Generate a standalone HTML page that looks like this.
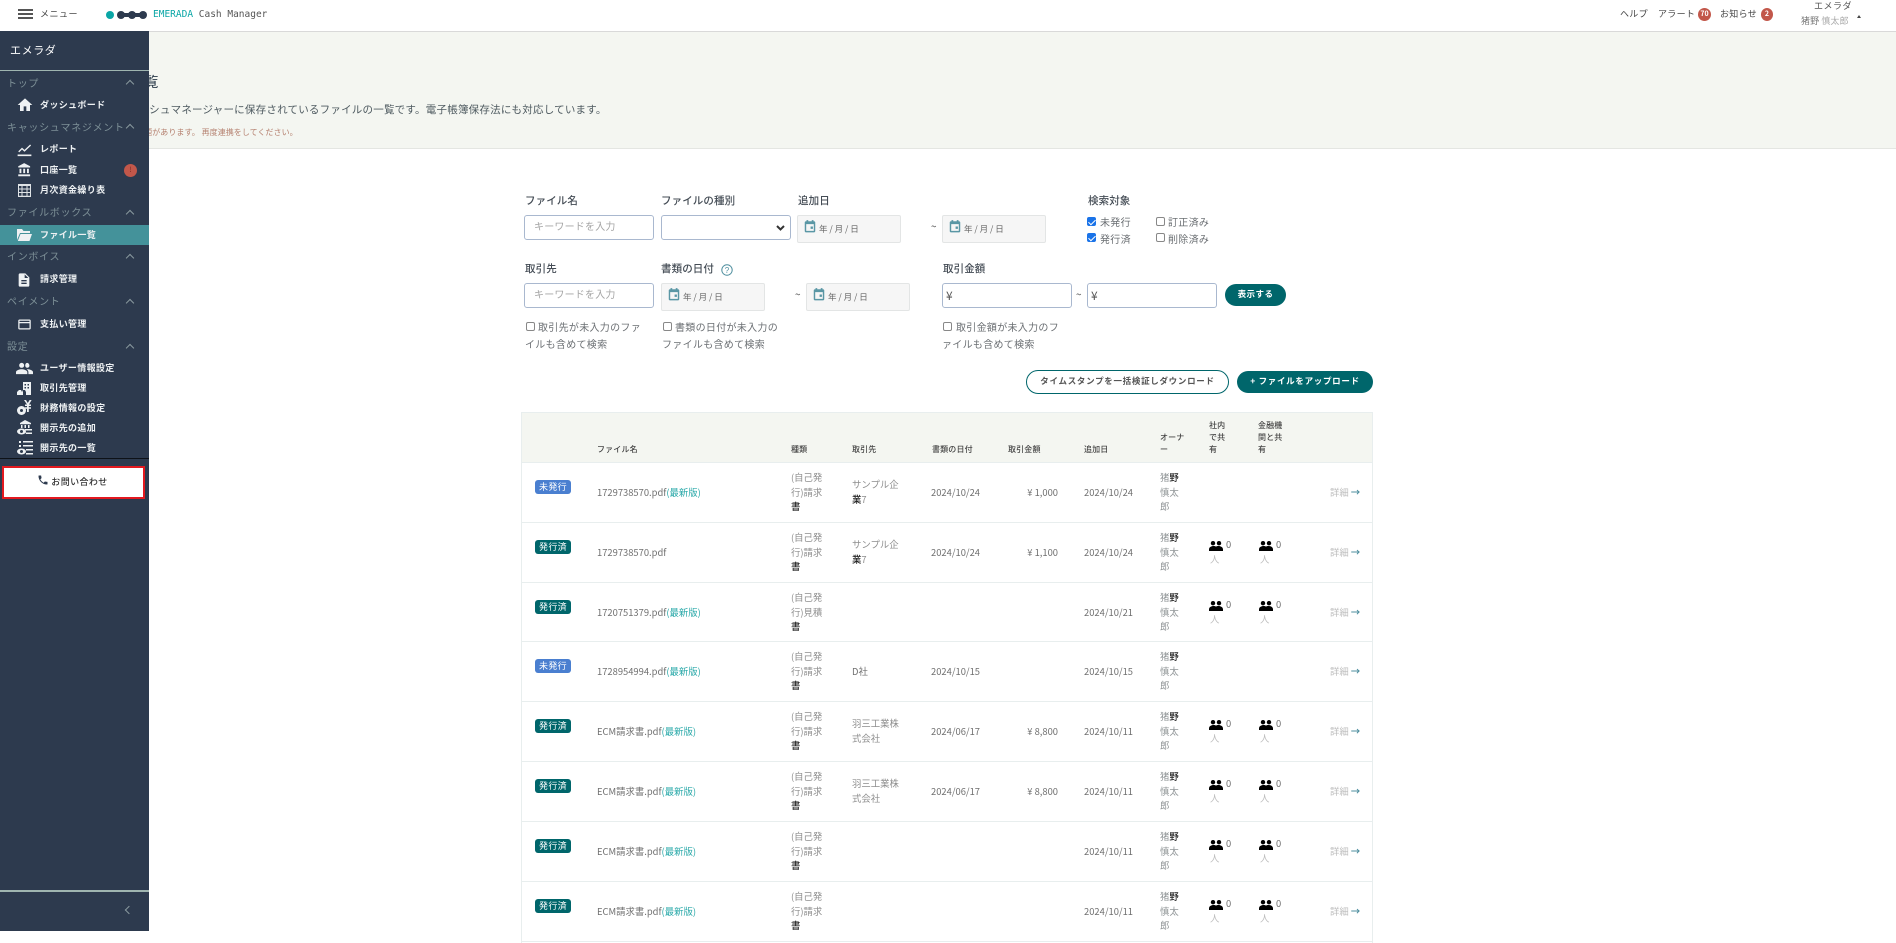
<!DOCTYPE html>
<html lang="ja"><head><meta charset="utf-8"><title>ファイル一覧</title>
<style>
*{box-sizing:border-box}
html,body{margin:0;padding:0}
body{position:relative;width:1896px;height:943px;overflow:hidden;background:#fff;font-family:"Liberation Sans","Noto Sans CJK JP",sans-serif;color:#555;font-size:10px}
body,div,span{font-family:"Noto Sans CJK JP","Liberation Sans",sans-serif}
.t{position:absolute;white-space:nowrap;line-height:14px}
svg{position:absolute;display:block}
#side{position:absolute;left:0;top:31px;width:149px;height:900px;background:#2d3a4e;z-index:5}
#side .h{position:absolute;left:7px;color:#7d9097;font-size:10px;letter-spacing:.7px;line-height:14px;white-space:nowrap}
#side .c{position:absolute;left:127px;width:6px;height:6px;border-left:1px solid #8b9ba0;border-top:1px solid #8b9ba0;transform:rotate(45deg)}
#side .i{position:absolute;left:40px;color:#eef1f3;font-size:9px;font-weight:700;letter-spacing:.35px;line-height:14px;white-space:nowrap}
#side svg{fill:#eef1f3;left:17px}
.lb{position:absolute;font-size:10.5px;font-weight:500;color:#444c55;line-height:14px;white-space:nowrap;letter-spacing:.1px}
.in{position:absolute;width:130px;height:25px;border:1px solid #a9b8cf;border-radius:3px;background:#fff;color:#a5a5a5;font-size:10px;line-height:20px;padding-left:9px;letter-spacing:.2px}
.dt{position:absolute;width:104px;height:28px;border:1px solid #e3e5e5;border-radius:2px;background:#f6f6f6;color:#666;font-size:8.5px;line-height:26px;padding-left:21px;word-spacing:0}
.dt svg{left:5px;top:3px}
.ck{position:absolute;width:9px;height:9px;border:1px solid #888;border-radius:2px;background:#fff}
.ck.on{background:#1a73e8;border-color:#1a73e8}
.ck.on:after{content:"";position:absolute;left:2px;top:0;width:3px;height:6px;border:solid #fff;border-width:0 1.3px 1.3px 0;transform:rotate(45deg)}
.gr{color:#6b6f73;font-size:10px;letter-spacing:.3px;position:absolute;white-space:nowrap;line-height:17px}
.btn{position:absolute;border-radius:12px;text-align:center;font-size:8.5px;font-weight:700;white-space:nowrap}
#tb{position:absolute;left:521px;top:412px;width:852px;height:531px;border-left:1px solid #e8eeee;border-right:1px solid #e8eeee;border-top:1px solid #e8eeee}
#th{position:absolute;left:0;top:0;width:850px;height:50px;background:#f4f6f1;border-bottom:1px solid #e8eeee}
.hc{position:absolute;font-size:8px;font-weight:500;color:#444;line-height:12px;white-space:nowrap;letter-spacing:.15px}
.r{position:absolute;left:521px;width:852px;height:60px;border-bottom:1px solid #e8eeee;color:#666;font-size:9.4px}
.r .t{line-height:14.5px;font-size:9.4px;color:#707070}
.r .m{color:#8e8e8e}
.m b{font-weight:500;color:#222}
.r .o{color:#8f9496}
.b{position:absolute;left:14px;top:17px;width:36px;height:14px;border-radius:3px;color:#fff;text-align:center;font-size:9px;line-height:13px;letter-spacing:.3px}
.g{background:#00666b}.u{background:#4a7fd0}
.lk{color:#2aa9a9}
.r .d{color:#bdbdbd}
.r .d span{color:#4f8f9f;font-weight:700}
</style></head><body>
<svg width="0" height="0" style="position:absolute"><defs>
<symbol id="ppl" viewBox="0 0 14 10"><circle cx="4" cy="2.200" r="2.200"/><circle cx="10" cy="2.200" r="2.200"/><path d="M0 10V8.500C0 6 2.500 5 4.500 5c1 0 2 .3 2.500.6.500-.3 1.500-.6 2.500-.6C11.500 5 14 6 14 8.500V10z"/></symbol>
<symbol id="cal" viewBox="0 0 24 24"><path fill="#5a97a5" d="M19 3h-1V1h-3v2H9V1H6v2H5C3.900 3 3 3.900 3 5v15c0 1.100.9 2 2 2h14c1.100 0 2-.9 2-2V5c0-1.100-.9-2-2-2zm-.500 16.500h-13V8h13v11.500zM13 12h4v4h-4z"/></symbol>
</defs></svg>

<!-- top bar -->
<div style="position:absolute;left:0;top:0;width:1896px;height:32px;background:#fff;border-bottom:1px solid #d9d9d9"></div>
<div style="position:absolute;left:18px;top:9px;width:15px;height:1.500px;background:#555"></div>
<div style="position:absolute;left:18px;top:13px;width:15px;height:1.500px;background:#555"></div>
<div style="position:absolute;left:18px;top:17px;width:15px;height:1.500px;background:#555"></div>
<div class="t" style="left:40px;top:7px;font-size:9px;color:#444;letter-spacing:.5px">メニュー</div>
<svg style="left:106px;top:10px" width="41" height="10" viewBox="0 0 41 10"><circle cx="4" cy="5" r="4" fill="#0aa6a6"/><circle cx="15" cy="5" r="4" fill="#2d3a4e"/><circle cx="26" cy="5" r="4" fill="#2d3a4e"/><circle cx="37" cy="5" r="4" fill="#2d3a4e"/><rect x="15" y="3" width="22" height="4" fill="#2d3a4e"/></svg>
<div class="t" style="left:153px;top:8px;font-family:'DejaVu Sans Mono',monospace;font-size:9.5px;color:#555"><span style="font-family:'DejaVu Sans Mono',monospace;color:#0aa6a6">EMERADA</span> Cash Manager</div>
<div class="t" style="left:1620px;top:7px;font-size:9px;color:#444;letter-spacing:.3px">ヘルプ</div>
<div class="t" style="left:1658px;top:7px;font-size:9px;color:#444;letter-spacing:.3px">アラート</div>
<div style="position:absolute;left:1698px;top:8px;width:13px;height:13px;border-radius:50%;background:#c2574a;color:#fff;font-size:7px;font-weight:700;text-align:center;line-height:13px">70</div>
<div class="t" style="left:1720px;top:7px;font-size:9px;color:#444;letter-spacing:.3px">お知らせ</div>
<div style="position:absolute;left:1761px;top:8px;width:12px;height:13px;border-radius:50%;background:#c2574a;color:#fff;font-size:7px;font-weight:700;text-align:center;line-height:13px">2</div>
<div class="t" style="left:1814px;top:-1px;font-size:9px;color:#555;letter-spacing:.5px">エメラダ</div>
<div class="t" style="left:1801px;top:14px;font-size:9px;color:#aaa;letter-spacing:.1px"><span style="color:#777">猪野</span> 慎太郎</div>
<div style="position:absolute;left:1857px;top:13px;border:2.500px solid transparent;border-bottom:3px solid #444"></div>

<!-- page header band -->
<div style="position:absolute;left:0;top:32px;width:1896px;height:117px;background:#f4f6f1;border-bottom:1px solid #e4e6e2"></div>
<div class="t" style="left:72px;top:75px;font-size:14.400px;line-height:14px;color:#2a3a4a">ファイル一覧</div>
<div class="t" style="left:117px;top:103px;font-size:10.500px;letter-spacing:.22px;color:#4e5a60">キャッシュマネージャーに保存されているファイルの一覧です。電子帳簿保存法にも対応しています。</div>
<div class="t" style="left:112px;top:126px;font-size:8px;color:#b5806f;letter-spacing:.05px">連携に問題があります。 再度連携をしてください。</div>

<!-- sidebar -->
<div id="side">
 <div class="t" style="left:10px;top:12px;font-size:11px;color:#fff;letter-spacing:.6px">エメラダ</div>
 <div style="position:absolute;left:0;top:39px;width:149px;height:1px;background:#9fb5b0"></div>
 <div class="h" style="top:45px">トップ</div><div class="c" style="top:50px"></div>
 <svg style="top:66px" width="16" height="16" viewBox="0 0 24 24"><path d="M10 21v-7h4v7h5.500v-9H23L12 2 1 12h3.500v9z"/></svg>
 <div class="i" style="top:67px">ダッシュボード</div>
 <div class="h" style="top:89px">キャッシュマネジメント</div><div class="c" style="top:94px"></div>
 <svg style="top:111px" width="15" height="15" viewBox="0 0 24 24"><path d="M2 15l6-6 4 3.500L21 4l1.500 1.500L12 15.500 8 12l-4.500 4.500zM1 20h22v2.500H1z"/></svg>
 <div class="i" style="top:111px">レポート</div>
 <svg style="top:131px" width="15" height="16" viewBox="0 0 24 24"><path d="M4 10v7h3v-7H4zm6 0v7h3v-7h-3zM2 22h19v-3H2v3zm14-12v7h3v-7h-3zm-4.500-9L2 6v2h19V6l-9.500-5z"/></svg>
 <div class="i" style="top:132px">口座一覧</div>
 <div style="position:absolute;left:124px;top:133px;width:13px;height:13px;border-radius:50%;background:#c2574a;color:#7a2b25;font-size:7px;text-align:center;line-height:13px">!</div>
 <svg style="top:152px" width="15" height="15" viewBox="0 0 15 15"><path fill="#dfe3e6" d="M1 1h13v13H1zM2 3v2.500h2.500V3zm3.500 0v2.500H9.500V3zm5 0v2.500H13V3zM2 6.500V9h2.500V6.500zm3.500 0V9H9.500V6.500zm5 0V9H13V6.500zM2 10v2.800h2.500V10zm3.500 0v2.800H9.500V10zm5 0v2.800H13V10z" fill-rule="evenodd"/></svg>
 <div class="i" style="top:152px">月次資金繰り表</div>
 <div class="h" style="top:174px">ファイルボックス</div><div class="c" style="top:180px"></div>
 <div style="position:absolute;left:0;top:194px;width:149px;height:20px;background:#44929a"></div>
 <svg style="top:197px" width="15" height="14" viewBox="0 0 15 14"><path d="M0 1h5l1.500 2H13v2H3L0 12zM3.500 6H15l-2.500 7H.8z"/></svg>
 <div class="i" style="top:197px">ファイル一覧</div>
 <div class="h" style="top:218px">インボイス</div><div class="c" style="top:224px"></div>
 <svg style="top:241px;left:16px" width="16" height="16" viewBox="0 0 24 24"><path d="M14 2H6c-1.100 0-1.990.9-1.990 2L4 20c0 1.100.89 2 1.990 2H18c1.100 0 2-.9 2-2V8l-6-6zm2 16H8v-2h8v2zm0-4H8v-2h8v2zm-3-5V3.500L18.500 9H13z"/></svg>
 <div class="i" style="top:241px">請求管理</div>
 <div class="h" style="top:263px">ペイメント</div><div class="c" style="top:269px"></div>
 <svg style="top:286px" width="15" height="15" viewBox="0 0 24 24"><path d="M20 4H4c-1.110 0-1.990.89-1.990 2L2 18c0 1.110.89 2 2 2h16c1.110 0 2-.89 2-2V6c0-1.110-.89-2-2-2zm0 14H4v-8h16v8zm0-10H4V6h16v2z"/></svg>
 <div class="i" style="top:286px">支払い管理</div>
 <div class="h" style="top:308px">設定</div><div class="c" style="top:314px"></div>
 <svg style="top:329px;left:16px" width="17" height="17" viewBox="0 0 24 24"><path d="M16 11c1.660 0 2.990-1.340 2.990-3S17.660 4 16 4c-1.660 0-3 1.340-3 3.500s1.340 3.500 3 3.500zm-8 0c2 0 3.500-1.500 3.500-3.500S10 4 8 4 4.500 5.500 4.500 7.500 6 11 8 11zm0 2c-2.800 0-8 1.300-8 4v3h16v-3c0-2.700-5.200-4-8-4zm8 0c-.3 0-.6 0-1 .1 1.500 1 2.500 2.300 2.500 3.900v3H24v-3c0-2.700-5.200-4-8-4z"/></svg>
 <div class="i" style="top:330px">ユーザー情報設定</div>
 <svg style="top:350px;left:17px" width="15" height="15" viewBox="0 0 15 15"><path d="M6 1h8v13H6zM7.500 3v1.500H9V3zm3 0v1.500H12V3zm-3 3v1.500H9V6zm3 0v1.500H12V6zM0 11l2-2h2l1 2 1-2h2l1 2v3H0z" fill-rule="evenodd"/></svg>
 <div class="i" style="top:350px">取引先管理</div>
 <svg style="top:369px;left:17px" width="16" height="16" viewBox="0 0 16 16"><circle cx="4.500" cy="10.500" r="4.500"/><circle cx="4.500" cy="10.500" r="1.500" fill="#2d3a4e"/><path d="M7 0h2l1.800 3L12.600 0h2L12 4.500H14V6H11.800v1.200H14v1.500h-2.200V12h-1.800V8.700H8V7.200h2V6H8V4.500h2z"/></svg>
 <div class="i" style="top:370px">財務情報の設定</div>
 <svg style="top:389px;left:17px" width="16" height="16" viewBox="0 0 16 16"><path d="M8 0l6 3v1.200H3V3zM4 5h1.500v3H4zm3.500 0H9v3H7.500zm3.500 0h1.500v3H11zM8 9h7v1.500H8zM8.500 12.500H15V14H9z"/><ellipse cx="4.500" cy="11.500" rx="4.500" ry="3"/><circle cx="4.500" cy="11.500" r="1.500" fill="#2d3a4e"/></svg>
 <div class="i" style="top:390px">開示先の追加</div>
 <svg style="top:409px;left:17px" width="16" height="16" viewBox="0 0 16 16"><path d="M2 1h2v2H2zm4 0h10v1.500H6zM2 5h2v2H2zm4 0h10v1.500H6zm3 4h7v1.500H9zm0 4h7v1.500H9z"/><ellipse cx="4.500" cy="11.500" rx="4.500" ry="3"/><circle cx="4.500" cy="11.500" r="1.500" fill="#2d3a4e"/></svg>
 <div class="i" style="top:410px">開示先の一覧</div>
 <div style="position:absolute;left:0;top:427px;width:149px;height:1px;background:#0e1218"></div>
 <div style="position:absolute;left:2px;top:435px;width:143px;height:33px;background:#fff;border:2px solid #e3191f;color:#333;font-size:9px;font-weight:500;text-align:center;line-height:27px;letter-spacing:.4px;padding-left:12px">お問い合わせ</div>
 <svg style="top:443px;left:37px;fill:#2d3a4e" width="12" height="12" viewBox="0 0 24 24"><path d="M6.620 10.790c1.440 2.830 3.760 5.140 6.590 6.590l2.200-2.200c.27-.27.67-.36 1.020-.24 1.120.37 2.330.57 3.570.57.55 0 1 .45 1 1V20c0 .55-.45 1-1 1-9.390 0-17-7.610-17-17 0-.55.45-1 1-1h3.500c.55 0 1 .45 1 1 0 1.250.2 2.450.57 3.570.11.35.03.74-.25 1.020l-2.200 2.200z"/></svg>
 <div style="position:absolute;left:0;top:859px;width:149px;height:2px;background:#9fb5b0"></div>
 <div style="position:absolute;left:126px;top:876px;width:6px;height:6px;border-left:1px solid #8b9ba0;border-bottom:1px solid #8b9ba0;transform:rotate(45deg)"></div>
</div>

<!-- search form -->
<div class="lb" style="left:525px;top:194px">ファイル名</div>
<div class="in" style="left:524px;top:215px">キーワードを入力</div>
<div class="lb" style="left:661px;top:194px">ファイルの種別</div>
<div class="in" style="left:661px;top:215px"></div>
<svg style="left:776px;top:225px" width="9" height="6" viewBox="0 0 9 6"><path d="M1 1l3.500 3.500L8 1" fill="none" stroke="#333" stroke-width="2"/></svg>
<div class="lb" style="left:798px;top:194px">追加日</div>
<div class="dt" style="left:797px;top:215px"><svg width="14" height="15"><use href="#cal"/></svg>年 / 月 / 日</div>
<div class="t" style="left:931px;top:219px;font-size:10px;color:#555">~</div>
<div class="dt" style="left:942px;top:215px"><svg width="14" height="15"><use href="#cal"/></svg>年 / 月 / 日</div>
<div class="lb" style="left:1088px;top:194px">検索対象</div>
<div class="ck on" style="left:1087px;top:217px"></div><div class="gr" style="left:1100px;top:213px">未発行</div>
<div class="ck" style="left:1156px;top:217px"></div><div class="gr" style="left:1168px;top:213px">訂正済み</div>
<div class="ck on" style="left:1087px;top:233px"></div><div class="gr" style="left:1100px;top:230px">発行済</div>
<div class="ck" style="left:1156px;top:233px"></div><div class="gr" style="left:1168px;top:230px">削除済み</div>

<div class="lb" style="left:525px;top:262px">取引先</div>
<div class="in" style="left:524px;top:283px">キーワードを入力</div>
<div class="lb" style="left:661px;top:262px">書類の日付</div>
<svg style="left:721px;top:264px" width="12" height="12" viewBox="0 0 12 12"><circle cx="6" cy="6" r="5.200" fill="none" stroke="#4f8f9f" stroke-width="1"/><text x="6" y="9" font-size="8" text-anchor="middle" fill="#4f8f9f" font-family="Liberation Sans">?</text></svg>
<div class="dt" style="left:661px;top:283px"><svg width="14" height="15"><use href="#cal"/></svg>年 / 月 / 日</div>
<div class="t" style="left:795px;top:287px;font-size:10px;color:#555">~</div>
<div class="dt" style="left:806px;top:283px"><svg width="14" height="15"><use href="#cal"/></svg>年 / 月 / 日</div>
<div class="lb" style="left:943px;top:262px">取引金額</div>
<div class="in" style="left:942px;top:283px;padding-left:3px;color:#555;font-size:12px;line-height:24px">¥</div>
<div class="t" style="left:1076px;top:287px;font-size:10px;color:#555">~</div>
<div class="in" style="left:1087px;top:283px;padding-left:3px;color:#555;font-size:12px;line-height:24px">¥</div>
<div class="btn" style="left:1225px;top:284px;width:61px;height:22px;background:#00666b;color:#fff;line-height:20px;letter-spacing:.45px">表示する</div>

<div class="ck" style="left:526px;top:322px"></div><div class="gr" style="left:538px;top:318px">取引先が未入力のファ</div><div class="gr" style="left:525px;top:335px">イルも含めて検索</div>
<div class="ck" style="left:663px;top:322px"></div><div class="gr" style="left:675px;top:318px">書類の日付が未入力の</div><div class="gr" style="left:662px;top:335px">ファイルも含めて検索</div>
<div class="ck" style="left:943px;top:322px"></div><div class="gr" style="left:956px;top:318px">取引金額が未入力のフ</div><div class="gr" style="left:942px;top:335px">ァイルも含めて検索</div>

<div class="btn" style="left:1026px;top:370px;width:203px;height:24px;border:1px solid #00666b;background:#fff;color:#555;line-height:21px;letter-spacing:.7px">タイムスタンプを一括検証しダウンロード</div>
<div class="btn" style="left:1237px;top:371px;width:136px;height:22px;background:#00666b;color:#fff;line-height:20px;letter-spacing:.7px">+ ファイルをアップロード</div>

<!-- table -->
<div id="tb"><div id="th">
 <div class="hc" style="left:75px;top:31px">ファイル名</div>
 <div class="hc" style="left:269px;top:31px">種類</div>
 <div class="hc" style="left:330px;top:31px">取引先</div>
 <div class="hc" style="left:410px;top:31px">書類の日付</div>
 <div class="hc" style="left:486px;top:31px">取引金額</div>
 <div class="hc" style="left:562px;top:31px">追加日</div>
 <div class="hc" style="left:638px;top:19px">オーナ<br>ー</div>
 <div class="hc" style="left:687px;top:7px">社内<br>で共<br>有</div>
 <div class="hc" style="left:736px;top:7px">金融機<br>関と共<br>有</div>
</div></div>

<div class="r" style="top:463px"><div class="b u">未発行</div><div class="t" style="left:76px;top:22px">1729738570.pdf<span class="lk">(最新版)</span></div><div class="t m" style="left:270px;top:7px">(自己発<br>行)請求<br><b>書</b></div><div class="t m" style="left:331px;top:14px">サンプル企<br><b>業</b>7</div><div class="t" style="left:410px;top:22px">2024/10/24</div><div class="t" style="right:315px;top:22px">¥ 1,000</div><div class="t" style="left:563px;top:22px">2024/10/24</div><div class="t o m" style="left:639px;top:7px">猪<b>野</b><br>慎太<br>郎</div><div class="t d" style="left:809px;top:22px">詳細 <span>→</span></div></div>

<div class="r" style="top:523px"><div class="b g">発行済</div><div class="t" style="left:76px;top:22px">1729738570.pdf</div><div class="t m" style="left:270px;top:7px">(自己発<br>行)請求<br><b>書</b></div><div class="t m" style="left:331px;top:14px">サンプル企<br><b>業</b>7</div><div class="t" style="left:410px;top:22px">2024/10/24</div><div class="t" style="right:315px;top:22px">¥ 1,100</div><div class="t" style="left:563px;top:22px">2024/10/24</div><div class="t o m" style="left:639px;top:7px">猪<b>野</b><br>慎太<br>郎</div><svg style="left:688px;top:18px" width="14" height="10"><use href="#ppl"/></svg><div class="t" style="left:705px;top:14px">0</div><div class="t d" style="left:689px;top:29px">人</div><svg style="left:738px;top:18px" width="14" height="10"><use href="#ppl"/></svg><div class="t" style="left:755px;top:14px">0</div><div class="t d" style="left:739px;top:29px">人</div><div class="t d" style="left:809px;top:22px">詳細 <span>→</span></div></div>

<div class="r" style="top:583px;height:59px"><div class="b g">発行済</div><div class="t" style="left:76px;top:22px">1720751379.pdf<span class="lk">(最新版)</span></div><div class="t m" style="left:270px;top:7px">(自己発<br>行)見積<br><b>書</b></div><div class="t" style="left:563px;top:22px">2024/10/21</div><div class="t o m" style="left:639px;top:7px">猪<b>野</b><br>慎太<br>郎</div><svg style="left:688px;top:18px" width="14" height="10"><use href="#ppl"/></svg><div class="t" style="left:705px;top:14px">0</div><div class="t d" style="left:689px;top:29px">人</div><svg style="left:738px;top:18px" width="14" height="10"><use href="#ppl"/></svg><div class="t" style="left:755px;top:14px">0</div><div class="t d" style="left:739px;top:29px">人</div><div class="t d" style="left:809px;top:22px">詳細 <span>→</span></div></div>

<div class="r" style="top:642px"><div class="b u">未発行</div><div class="t" style="left:76px;top:22px">1728954994.pdf<span class="lk">(最新版)</span></div><div class="t m" style="left:270px;top:7px">(自己発<br>行)請求<br><b>書</b></div><div class="t" style="left:331px;top:22px">D社</div><div class="t" style="left:410px;top:22px">2024/10/15</div><div class="t" style="left:563px;top:22px">2024/10/15</div><div class="t o m" style="left:639px;top:7px">猪<b>野</b><br>慎太<br>郎</div><div class="t d" style="left:809px;top:22px">詳細 <span>→</span></div></div>

<div class="r" style="top:702px"><div class="b g">発行済</div><div class="t" style="left:76px;top:22px">ECM請求書.pdf<span class="lk">(最新版)</span></div><div class="t m" style="left:270px;top:7px">(自己発<br>行)請求<br><b>書</b></div><div class="t m" style="left:331px;top:14px">羽三工業株<br>式会社</div><div class="t" style="left:410px;top:22px">2024/06/17</div><div class="t" style="right:315px;top:22px">¥ 8,800</div><div class="t" style="left:563px;top:22px">2024/10/11</div><div class="t o m" style="left:639px;top:7px">猪<b>野</b><br>慎太<br>郎</div><svg style="left:688px;top:18px" width="14" height="10"><use href="#ppl"/></svg><div class="t" style="left:705px;top:14px">0</div><div class="t d" style="left:689px;top:29px">人</div><svg style="left:738px;top:18px" width="14" height="10"><use href="#ppl"/></svg><div class="t" style="left:755px;top:14px">0</div><div class="t d" style="left:739px;top:29px">人</div><div class="t d" style="left:809px;top:22px">詳細 <span>→</span></div></div>

<div class="r" style="top:762px"><div class="b g">発行済</div><div class="t" style="left:76px;top:22px">ECM請求書.pdf<span class="lk">(最新版)</span></div><div class="t m" style="left:270px;top:7px">(自己発<br>行)請求<br><b>書</b></div><div class="t m" style="left:331px;top:14px">羽三工業株<br>式会社</div><div class="t" style="left:410px;top:22px">2024/06/17</div><div class="t" style="right:315px;top:22px">¥ 8,800</div><div class="t" style="left:563px;top:22px">2024/10/11</div><div class="t o m" style="left:639px;top:7px">猪<b>野</b><br>慎太<br>郎</div><svg style="left:688px;top:18px" width="14" height="10"><use href="#ppl"/></svg><div class="t" style="left:705px;top:14px">0</div><div class="t d" style="left:689px;top:29px">人</div><svg style="left:738px;top:18px" width="14" height="10"><use href="#ppl"/></svg><div class="t" style="left:755px;top:14px">0</div><div class="t d" style="left:739px;top:29px">人</div><div class="t d" style="left:809px;top:22px">詳細 <span>→</span></div></div>

<div class="r" style="top:822px"><div class="b g">発行済</div><div class="t" style="left:76px;top:22px">ECM請求書.pdf<span class="lk">(最新版)</span></div><div class="t m" style="left:270px;top:7px">(自己発<br>行)請求<br><b>書</b></div><div class="t" style="left:563px;top:22px">2024/10/11</div><div class="t o m" style="left:639px;top:7px">猪<b>野</b><br>慎太<br>郎</div><svg style="left:688px;top:18px" width="14" height="10"><use href="#ppl"/></svg><div class="t" style="left:705px;top:14px">0</div><div class="t d" style="left:689px;top:29px">人</div><svg style="left:738px;top:18px" width="14" height="10"><use href="#ppl"/></svg><div class="t" style="left:755px;top:14px">0</div><div class="t d" style="left:739px;top:29px">人</div><div class="t d" style="left:809px;top:22px">詳細 <span>→</span></div></div>

<div class="r" style="top:882px"><div class="b g">発行済</div><div class="t" style="left:76px;top:22px">ECM請求書.pdf<span class="lk">(最新版)</span></div><div class="t m" style="left:270px;top:7px">(自己発<br>行)請求<br><b>書</b></div><div class="t" style="left:563px;top:22px">2024/10/11</div><div class="t o m" style="left:639px;top:7px">猪<b>野</b><br>慎太<br>郎</div><svg style="left:688px;top:18px" width="14" height="10"><use href="#ppl"/></svg><div class="t" style="left:705px;top:14px">0</div><div class="t d" style="left:689px;top:29px">人</div><svg style="left:738px;top:18px" width="14" height="10"><use href="#ppl"/></svg><div class="t" style="left:755px;top:14px">0</div><div class="t d" style="left:739px;top:29px">人</div><div class="t d" style="left:809px;top:22px">詳細 <span>→</span></div></div>
</body></html>
